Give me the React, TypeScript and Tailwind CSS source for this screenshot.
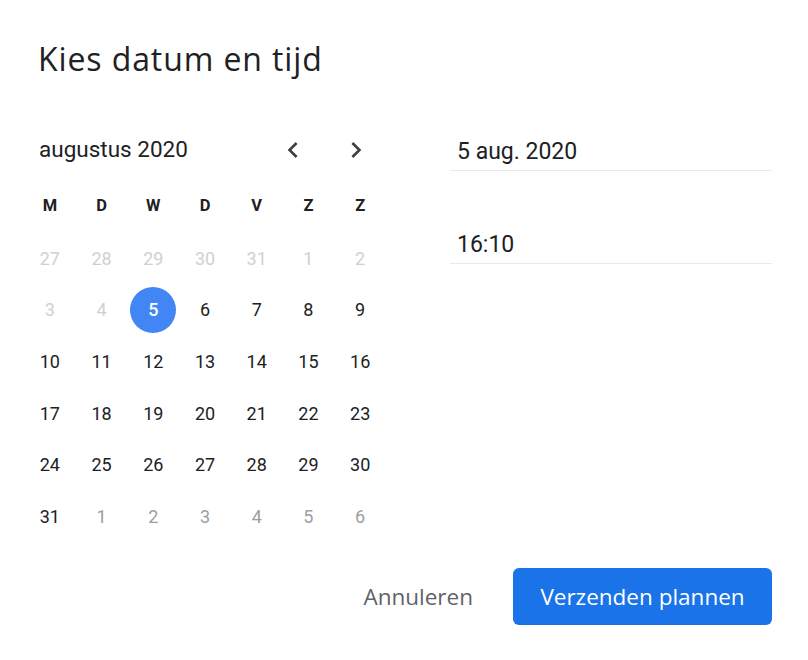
import React from "react";

const GS = { fontFamily: '"Open Sans", "Noto Sans", sans-serif' };
const RB = { fontFamily: 'Roboto, "Noto Sans", sans-serif' };

type Cell = { d: number; kind: "prev" | "cur" | "next" | "sel" };

const cells: Cell[] = [
  ...[27, 28, 29, 30, 31].map((d) => ({ d, kind: "prev" as const })),
  ...[1, 2, 3, 4].map((d) => ({ d, kind: "prev" as const })),
  { d: 5, kind: "sel" },
  ...Array.from({ length: 26 }, (_, i) => ({ d: i + 6, kind: "cur" as const })),
  ...[1, 2, 3, 4, 5, 6].map((d) => ({ d, kind: "next" as const })),
];

function Chevron({ dir }: { dir: "l" | "r" }) {
  return (
    <svg width="32" height="32" viewBox="0 0 24 24" fill="#3c4043">
      {dir === "l" ? (
        <path d="M15.41 7.41L14 6l-6 6 6 6 1.41-1.41L10.83 12z" />
      ) : (
        <path d="M8.59 16.59L10 18l6-6-6-6-1.41 1.41L13.17 12z" />
      )}
    </svg>
  );
}

export default function App() {
  return (
    <div className="w-[808px] h-[660px] bg-white relative overflow-hidden">
      <div className="pt-[37px] pl-[38px]">
        <h1 className="text-[32px] tracking-[0.9px] leading-[44px] text-[#202124]" style={GS}>
          Kies datum en tijd
        </h1>
      </div>
      <div className="flex mt-[44px]">
        <div className="ml-[24px] w-[362px]">
          <div className="h-[50px] flex items-center">
            <div className="pl-[15px] text-[22.5px] text-[#202124] flex-1" style={RB}>
              augustus 2020
            </div>
            <div className="flex items-center mr-[14px]">
              <button className="w-[32px] h-[32px] flex items-center justify-center">
                <Chevron dir="l" />
              </button>
              <button className="w-[32px] h-[32px] flex items-center justify-center ml-[31px]">
                <Chevron dir="r" />
              </button>
            </div>
          </div>
          <div className="grid grid-cols-7 mt-[6px]" style={RB}>
            {["M", "D", "W", "D", "V", "Z", "Z"].map((l, i) => (
              <div
                key={i}
                className="h-[51.6px] flex items-center justify-center text-[16.5px] font-bold text-[#202124]"
              >
                {l}
              </div>
            ))}
            {cells.map((c, i) => (
              <div key={i} className="h-[51.6px] flex items-center justify-center">
                {c.kind === "sel" ? (
                  <div className="w-[46px] h-[46px] rounded-full bg-[#4285f4] flex items-center justify-center text-white text-[18px] font-medium">
                    {c.d}
                  </div>
                ) : (
                  <span
                    className={
                      "text-[18px] " +
                      (c.kind === "prev"
                        ? "text-[#d0d0d0]"
                        : c.kind === "next"
                        ? "text-[#9e9e9e]"
                        : "text-[#202124]")
                    }
                  >
                    {c.d}
                  </span>
                )}
              </div>
            ))}
          </div>
        </div>
        <div className="ml-[64px] w-[322px]" style={RB}>
          <div className="h-[46px] border-b border-[#e8eaed] flex items-center pl-[7px] pt-[10px] text-[23px] text-[#202124]">
            5 aug. 2020
          </div>
          <div className="mt-[46px] h-[47px] border-b border-[#e8eaed] flex items-center pl-[7px] pt-[10px] text-[23px] text-[#202124]">
            16:10
          </div>
        </div>
      </div>
      <div className="absolute left-0 right-0 top-[568px] flex justify-end items-center pr-[36px]">
        <button className="text-[22.5px] font-medium text-[#5f6368] mr-[40px]" style={GS}>
          Annuleren
        </button>
        <button
          className="w-[259px] h-[57px] rounded-[6px] bg-[#1a73e8] text-white text-[22.5px] font-medium flex items-center justify-center"
          style={GS}
        >
          Verzenden plannen
        </button>
      </div>
    </div>
  );
}
